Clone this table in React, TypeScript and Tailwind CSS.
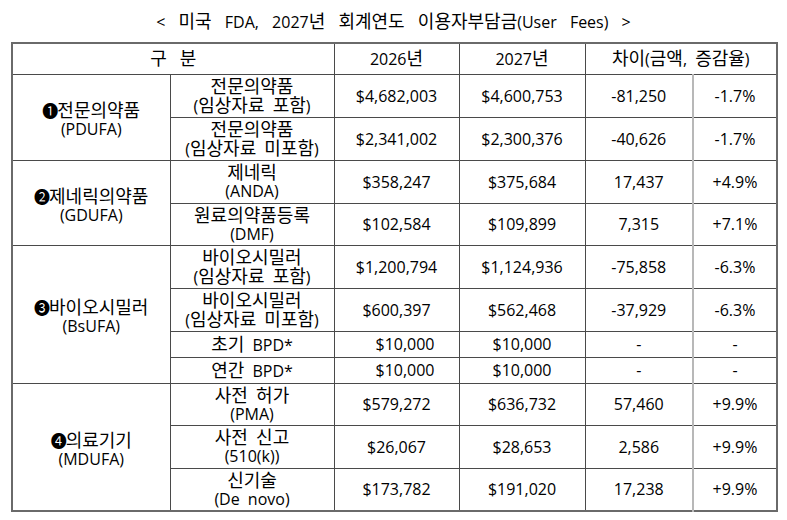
import React from "react";

type Row = {
  sub: string[];
  y26: string;
  y27: string;
  diff: string;
  pct: string;
  h: string;
  shift?: boolean;
};

type Group = {
  mark: string;
  name: string;
  code: string;
  rows: Row[];
};

const groups: Group[] = [
  {
    mark: "❶",
    name: "전문의약품",
    code: "(PDUFA)",
    rows: [
      { sub: ["전문의약품", "(임상자료 포함)"], y26: "$4,682,003", y27: "$4,600,753", diff: "-81,250", pct: "-1.7%", h: "h-[43px]" },
      { sub: ["전문의약품", "(임상자료 미포함)"], y26: "$2,341,002", y27: "$2,300,376", diff: "-40,626", pct: "-1.7%", h: "h-[43px]" },
    ],
  },
  {
    mark: "❷",
    name: "제네릭의약품",
    code: "(GDUFA)",
    rows: [
      { sub: ["제네릭", "(ANDA)"], y26: "$358,247", y27: "$375,684", diff: "17,437", pct: "+4.9%", h: "h-[43px]" },
      { sub: ["원료의약품등록", "(DMF)"], y26: "$102,584", y27: "$109,899", diff: "7,315", pct: "+7.1%", h: "h-[42px]" },
    ],
  },
  {
    mark: "❸",
    name: "바이오시밀러",
    code: "(BsUFA)",
    rows: [
      { sub: ["바이오시밀러", "(임상자료 포함)"], y26: "$1,200,794", y27: "$1,124,936", diff: "-75,858", pct: "-6.3%", h: "h-[43px]" },
      { sub: ["바이오시밀러", "(임상자료 미포함)"], y26: "$600,397", y27: "$562,468", diff: "-37,929", pct: "-6.3%", h: "h-[43px]" },
      { sub: ["초기 BPD*"], y26: "$10,000", y27: "$10,000", diff: "-", pct: "-", h: "h-[26px]", shift: true },
      { sub: ["연간 BPD*"], y26: "$10,000", y27: "$10,000", diff: "-", pct: "-", h: "h-[26px]", shift: true },
    ],
  },
  {
    mark: "❹",
    name: "의료기기",
    code: "(MDUFA)",
    rows: [
      { sub: ["사전 허가", "(PMA)"], y26: "$579,272", y27: "$636,732", diff: "57,460", pct: "+9.9%", h: "h-[42px]" },
      { sub: ["사전 신고", "(510(k))"], y26: "$26,067", y27: "$28,653", diff: "2,586", pct: "+9.9%", h: "h-[43px]" },
      { sub: ["신기술", "(De novo)"], y26: "$173,782", y27: "$191,020", diff: "17,238", pct: "+9.9%", h: "h-[43px]" },
    ],
  },
];

function K({ t }: { t: string }) {
  const parts = t.split(/([\u3131-\uD7A3]+)/);
  return (
    <>
      {parts.map((p, i) =>
        /[\u3131-\uD7A3]/.test(p) ? (
          <span key={i} className="text-[18px]">
            {p}
          </span>
        ) : (
          <React.Fragment key={i}>{p}</React.Fragment>
        )
      )}
    </>
  );
}

const cell = "border border-[#4a4a4a] p-0 text-center align-middle";

export default function App() {
  return (
    <div
      className="w-[787px] h-[520px] bg-white text-black text-[16px] leading-[18px]"
      style={{ fontFamily: "'Open Sans', 'Noto Sans CJK KR', 'DejaVu Sans', sans-serif" }}
    >
      <div className="h-[42px] pt-[12px] text-center [word-spacing:9px]">
        <K t="< 미국 FDA, 2027년 회계연도 이용자부담금(User Fees) >" />
      </div>
      <table className="ml-[11px] border-collapse table-fixed border-2 border-[#6a6a6a]">
        <colgroup>
          <col className="w-[158px]" />
          <col className="w-[164px]" />
          <col className="w-[125px]" />
          <col className="w-[126px]" />
          <col className="w-[108px]" />
          <col className="w-[84px]" />
        </colgroup>
        <thead>
          <tr className="h-[31px]">
            <th colSpan={2} className={`${cell} font-normal`}>
              <K t="구" />
              <span className="ml-[13px]">
                <K t="분" />
              </span>
            </th>
            <th className={`${cell} font-normal`}>
              <K t="2026년" />
            </th>
            <th className={`${cell} font-normal`}>
              <K t="2027년" />
            </th>
            <th colSpan={2} className={`${cell} font-normal [word-spacing:4px]`}>
              <K t="차이(금액, 증감율)" />
            </th>
          </tr>
        </thead>
        <tbody>
          {groups.map((g) =>
            g.rows.map((r, i) => (
              <tr key={g.name + i} className={r.h}>
                {i === 0 && (
                  <td rowSpan={g.rows.length} className={`${cell} pt-[5px]`}>
                    <div className="whitespace-nowrap">
                      <span
                        className="inline-block w-[15px] text-left text-[16px] overflow-visible"
                        style={{ fontFamily: "'Noto Sans CJK KR', sans-serif" }}
                      >
                        {g.mark}
                      </span>
                      <K t={g.name} />
                    </div>
                    <div>{g.code}</div>
                  </td>
                )}
                <td className={`${cell} [word-spacing:4px]`}>
                  {r.sub.map((s) => (
                    <div key={s}>
                      <K t={s} />
                    </div>
                  ))}
                </td>
                <td className={`${cell} ${r.shift ? "pl-[17px]" : ""}`}>{r.y26}</td>
                <td className={cell}>{r.y27}</td>
                <td className={`${cell} border-r-2 border-r-[#b8b8b8]`}>{r.diff}</td>
                <td className={cell}>{r.pct}</td>
              </tr>
            ))
          )}
        </tbody>
      </table>
    </div>
  );
}
